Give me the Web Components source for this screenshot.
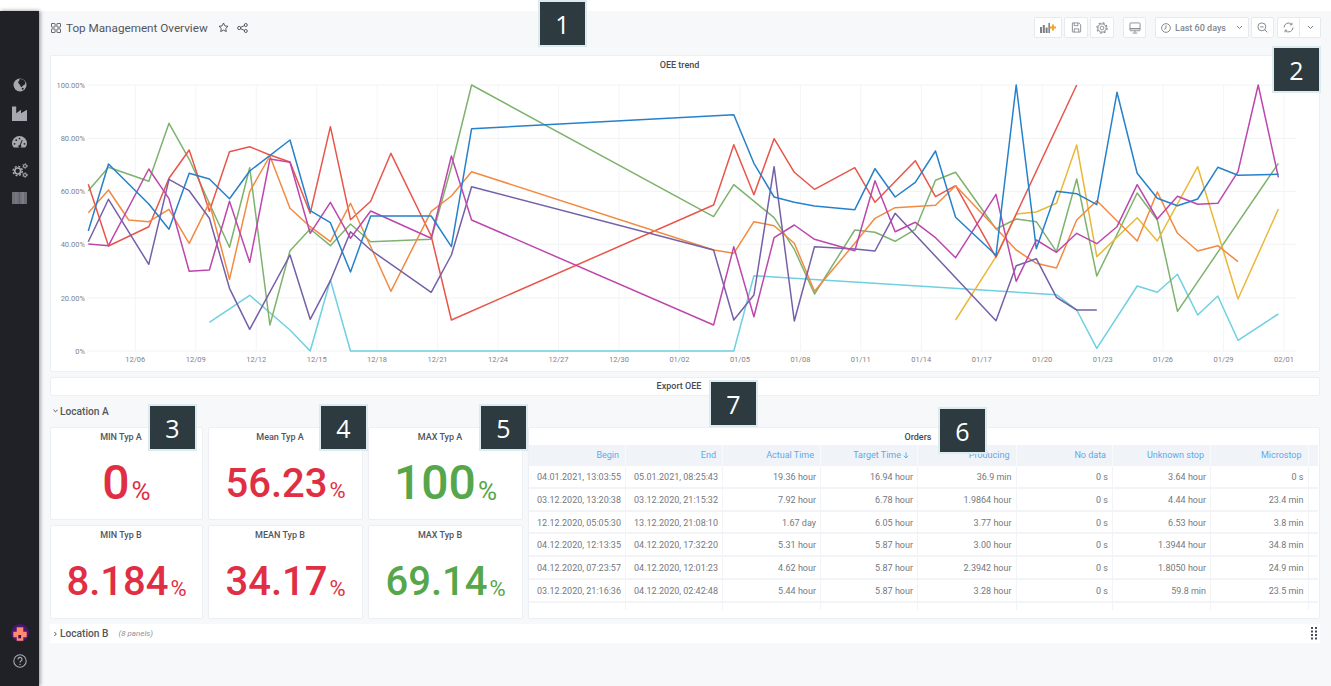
<!DOCTYPE html>
<html><head><meta charset="utf-8"><style>
html,body{margin:0;padding:0;height:100%;background:#fff;overflow:hidden}
body{font-family:Roboto,"Liberation Sans",sans-serif;color:#464c54}
</style></head><body>
<x-app>
  <x-sidebar></x-sidebar>
  <x-main>
    <x-toolbar></x-toolbar>
    <x-chart></x-chart>
    <x-bar-title>Export OEE</x-bar-title>
    <x-row-head open>Location A</x-row-head>
    <x-grid>
      <x-stat label="MIN Typ A" value="0" color="#e02f44" size="48" unit="26" base="17"></x-stat>
      <x-stat label="Mean Typ A" value="56.23" color="#e02f44" size="40" unit="22" base="19"></x-stat>
      <x-stat label="MAX Typ A" value="100" color="#56a64b" size="48" unit="26" base="17"></x-stat>
      <x-table></x-table>
      <x-stat label="MIN Typ B" value="8.184" color="#e02f44" size="40" unit="22" base="20"></x-stat>
      <x-stat label="MEAN Typ B" value="34.17" color="#e02f44" size="40" unit="22" base="20"></x-stat>
      <x-stat label="MAX Typ B" value="69.14" color="#56a64b" size="40" unit="22" base="20"></x-stat>
    </x-grid>
    <x-row-head note="(8 panels)" handle>Location B</x-row-head>
  </x-main>
  <x-callout n="1" x="538" y="0"></x-callout>
  <x-callout n="2" x="1272" y="46"></x-callout>
  <x-callout n="3" x="148" y="404"></x-callout>
  <x-callout n="4" x="319" y="404"></x-callout>
  <x-callout n="5" x="479" y="404"></x-callout>
  <x-callout n="6" x="938" y="407"></x-callout>
  <x-callout n="7" x="709" y="380"></x-callout>
</x-app>
<script>
const def=(name,render)=>customElements.define(name,class extends HTMLElement{
  constructor(){super();this.attachShadow({mode:'open'});}
  connectedCallback(){this.shadowRoot.innerHTML=render(this);}
});
def('x-app',()=>`<style>:host{display:flex;position:relative;width:1331px;height:686px;box-sizing:border-box;padding-top:11px;background:#fff;overflow:hidden}</style><slot></slot>`);

const I='#a6a9b0', D='#1f2126';
def('x-sidebar',()=>`<style>
:host{display:flex;flex-direction:column;align-items:center;width:39px;flex:none;background:${D};box-shadow:1px 0 4px rgba(0,0,0,.45);position:relative;z-index:2;box-sizing:border-box;padding:60px 0 18px}
.top{display:flex;flex-direction:column;align-items:center}
.top>div{height:28.300px;display:flex;align-items:center;justify-content:center}
.bot{margin-top:auto;display:flex;flex-direction:column;align-items:center;gap:12px}
svg{display:block}
</style>
<div class="top">
<div><svg width="14" height="14" viewBox="0 0 14 14"><circle cx="7" cy="7" r="6.500" fill="${I}"/><path d="M6.500 1.200c1.800-.4 4 .4 5.300 2 .5 1 .6 2 .3 3-.8.700-1.800 1-2.500 1.700-.5.500-.9 1.200-1.500 1.100-.8-.2-.7-1.200-1-1.900C6.800 6.200 5 5.500 5.200 4.300c.2-1.200 1.600-1.700 1.300-3.100z" fill="${D}"/><circle cx="9.700" cy="10.700" r="1" fill="${D}"/></svg></div>
<div><svg width="15" height="15" viewBox="0 0 15 15"><path d="M0 .5h4.200v6.700L9 3.800v3.400l6-3.400V15H0z" fill="${I}"/></svg></div>
<div><svg width="15" height="12" viewBox="0 0 15 12"><path d="M1.800 11.500C.7 10.300 0 8.900 0 7.500a7.500 7.500 0 0 1 15 0c0 1.400-.7 2.800-1.800 4z" fill="${I}"/><g fill="${D}"><circle cx="2.500" cy="7.800" r=".9"/><circle cx="4.200" cy="4.200" r=".9"/><circle cx="7.500" cy="2.600" r=".9"/><circle cx="12.500" cy="7.800" r=".9"/><path d="M9.800 4l.9.300-2 5a1.400 1.400 0 1 1-1-.3z"/></g></svg></div>
<div><svg width="16" height="15" viewBox="0 0 16 15"><g fill="none" stroke="${I}"><circle cx="5.700" cy="8" r="3" stroke-width="1.700"/><circle cx="5.700" cy="8" r="4.600" stroke-width="1.400" stroke-dasharray="2 1.610"/><circle cx="13" cy="3" r="1.500" stroke-width="1.100"/><circle cx="13" cy="3" r="2.400" stroke-width=".8" stroke-dasharray="1.200 1.310"/><circle cx="13" cy="12" r="1.500" stroke-width="1.100"/><circle cx="13" cy="12" r="2.400" stroke-width=".8" stroke-dasharray="1.200 1.310"/></g></svg></div>
<div><svg width="15" height="12" viewBox="0 0 15 12"><defs><linearGradient id="bc"><stop offset="0" stop-color="#6a6d72"/><stop offset=".3" stop-color="#7b7e85"/><stop offset=".5" stop-color="#6b6478"/><stop offset=".7" stop-color="#84868c"/><stop offset="1" stop-color="#63666b"/></linearGradient></defs><rect width="15" height="12" fill="url(#bc)"/><path d="M2.500 0v12M5 0v12M7.500 0v12M10 0v12M12.500 0v12" stroke="#55575c" stroke-width=".5" opacity=".6"/></svg></div>
</div>
<div class="bot">
<svg width="18" height="18" viewBox="0 0 18 18"><circle cx="9" cy="9" r="9" fill="#4b1670"/><path d="M5.700 3.300h6.600v4.400h3.400v5.600h-3.400v3.400H5.700v-3.400H2.300V7.700h3.400z" fill="#ff8a6e"/><rect x="7.300" y="11" width="2.800" height="3.300" fill="#3a1560"/></svg>
<svg width="14" height="14" viewBox="0 0 14 14" fill="none" stroke="${I}"><circle cx="7" cy="7" r="6.200" stroke-width="1.100"/><path d="M5 5.400a2 2 0 1 1 3 1.700c-.7.400-1 .8-1 1.500" stroke-width="1.200"/><circle cx="7" cy="10.400" r=".7" fill="${I}" stroke="none"/></svg>
</div>`);

def('x-main',()=>`<style>:host{flex:1;display:flex;flex-direction:column;background:#f7f8fa;padding:0 11px;min-width:0}</style><slot></slot>`);

const G='#7b7f86';
const ic={
 add:`<svg width="16" height="11" viewBox="0 0 16 11"><g fill="${G}"><rect x="0" y="5" width="2" height="6"/><rect x="2.800" y="3" width="2" height="8"/><rect x="5.600" y="5.500" width="2" height="5.500"/><rect x="8.400" y="1" width="1.500" height="10"/></g><path d="M13 2.500v6M10 5.500h6" stroke="#f5a623" stroke-width="2"/></svg>`,
 save:`<svg width="11" height="11" viewBox="0 0 12 12" fill="none" stroke="${G}" stroke-width=".9"><path d="M1.500 1h7l2 2v7.500a.5.500 0 0 1-.5.500H2a.5.500 0 0 1-.5-.5z"/><path d="M3.500 1v3h4V1M3.500 11V7.500h5V11"/></svg>`,
 gear:`<svg width="12" height="12" viewBox="0 0 13 13" fill="none" stroke="${G}"><circle cx="6.500" cy="6.500" r="2" stroke-width=".9"/><circle cx="6.500" cy="6.500" r="4.500" stroke-width="1"/><circle cx="6.500" cy="6.500" r="5.600" stroke-width="1.100" stroke-dasharray="2.200 2.200"/></svg>`,
 mon:`<svg width="12" height="12" viewBox="0 0 13 13" fill="none" stroke="${G}" stroke-width=".9"><rect x="1" y="1" width="11" height="8.500" rx="1"/><path d="M1 7.300h11" stroke-width="1.300"/><path d="M6.500 9.500v2M4 12h5"/></svg>`,
 clock:`<svg width="10" height="10" viewBox="0 0 11 11" fill="none" stroke="${G}" stroke-width="1"><circle cx="5.500" cy="5.500" r="4.800"/><path d="M5.500 2.500v3.300L3.500 7"/></svg>`,
 chev:`<svg width="7" height="5" viewBox="0 0 7 5" fill="none" stroke="${G}" stroke-width="1"><path d="M1 1l2.500 2.500L6 1"/></svg>`,
 zoom:`<svg width="11" height="11" viewBox="0 0 12 12" fill="none" stroke="${G}" stroke-width="1"><circle cx="5.300" cy="5.300" r="4.300"/><path d="M8.500 8.500l2.800 2.800M3.300 5.300h4"/></svg>`,
 sync:`<svg width="11" height="11" viewBox="0 0 12 12" fill="none" stroke="${G}" stroke-width="1"><path d="M1.100 6A4.900 4.900 0 0 1 9.400 2.500M10.900 6a4.900 4.900 0 0 1-8.300 3.500"/><path d="M9.800.7v2.400H7.400M2.200 11.300V8.900h2.400" stroke-width=".9"/></svg>`
};
def('x-toolbar',()=>`<style>
:host{display:flex;align-items:center;height:44px;flex:none;color:#52565d;box-sizing:border-box;padding-bottom:11px}
.t{display:flex;align-items:center;font-size:11.700px;color:#52565d}
.t svg{display:block}
.r{margin-left:auto;display:flex;align-items:center;margin-right:-1px}
.b{height:21px;box-sizing:border-box;background:#fff;border:1px solid #e6e9ee;border-radius:2px;display:flex;align-items:center;justify-content:center}
.time{font-size:9px;font-weight:500;color:#83878e;gap:4px}
</style>
<div class="t">
<svg width="10" height="10" viewBox="0 0 11 11" fill="none" stroke="#52565d" stroke-width="1" style="margin:0 5px 0 1px"><rect x=".5" y=".5" width="4" height="4" rx=".5"/><rect x="6.500" y=".5" width="4" height="4" rx=".5"/><rect x=".5" y="6.500" width="4" height="4" rx=".5"/><rect x="6.500" y="6.500" width="4" height="4" rx=".5"/></svg>
<span>Top Management Overview</span>
<svg width="11" height="11" viewBox="0 0 11 11" fill="none" stroke="#45494f" stroke-width=".9" style="margin-left:10px"><path d="M5.500 1l1.400 2.900 3.100.4-2.300 2.200.6 3.100-2.800-1.500-2.800 1.500.6-3.100L1 4.300l3.100-.4z"/></svg>
<svg width="11" height="10" viewBox="0 0 11 10" fill="none" stroke="#45494f" stroke-width=".9" style="margin-left:8px"><circle cx="2.200" cy="5" r="1.600"/><circle cx="8.800" cy="2" r="1.500"/><circle cx="8.800" cy="8" r="1.500"/><path d="M3.700 4.300l3.700-1.700M3.700 5.700l3.700 1.700"/></svg>
</div>
<div class="r">
<div class="b" style="width:28px;margin-right:2px">${ic.add}</div>
<div class="b" style="width:24px;margin-right:2px">${ic.save}</div>
<div class="b" style="width:24px;margin-right:9px">${ic.gear}</div>
<div class="b" style="width:23px;margin-right:9px">${ic.mon}</div>
<div class="b time" style="width:94px;margin-right:2px">${ic.clock}<span>Last 60 days</span><span style="width:2px"></span>${ic.chev}</div>
<div class="b" style="width:23px;margin-right:3px">${ic.zoom}</div>
<div class="b" style="width:23px;border-radius:2px 0 0 2px">${ic.sync}</div>
<div class="b" style="width:21px;border-left:0;border-radius:0 2px 2px 0">${ic.chev}</div>
</div>`);

const S=[
 ['#6ed0e0',[[6,757],[8,676],[10,780],[11,843],[12,630],[13,843],[32,843],[33,617],[48,674],[49,720],[50,835],[52,648],[53,667],[54,613],[55,735],[56,678],[57,811],[59,732]]],
 ['#7eb26d',[[0,362],[1,292],[3,334],[4,160],[5,268],[7,532],[8,293],[9,765],[10,542],[11,477],[12,527],[13,462],[14,515],[17,508],[18,290],[19,45],[31,440],[32,344],[34,443],[35,538],[36,672],[38,480],[39,487],[40,514],[41,478],[42,331],[43,307],[45,477],[46,447],[47,455],[48,545],[49,327],[50,618],[52,369],[53,450],[54,724],[59,280]]],
 ['#eab839',[[43,750],[45,560],[46,432],[47,426],[48,400],[49,225],[50,560],[52,443],[53,513],[55,290],[57,687],[59,417]]],
 ['#e8554a',[[0,343],[1,528],[3,470],[4,325],[5,240],[6,424],[7,245],[8,230],[9,255],[10,276],[11,430],[12,170],[13,449],[14,394],[15,250],[17,498],[18,750],[31,405],[32,224],[33,374],[34,206],[35,307],[36,358],[38,293],[39,397],[41,272],[42,380],[43,347],[45,562],[49,45]]],
 ['#f28a42',[[0,428],[1,360],[2,450],[3,455],[4,418],[5,520],[6,398],[7,628],[8,365],[9,258],[10,415],[11,470],[12,515],[13,400],[14,530],[15,664],[17,424],[18,378],[19,305],[31,540],[32,550],[33,455],[34,467],[35,520],[36,664],[38,520],[39,445],[40,413],[42,406],[43,347],[45,475],[46,540],[47,580],[48,594],[49,450],[50,392],[52,513],[53,366],[54,490],[55,543],[56,527],[57,575]]],
 ['#7560a8',[[0,515],[1,388],[3,583],[4,328],[5,362],[6,445],[7,655],[8,778],[10,555],[11,748],[12,632],[13,485],[14,540],[17,667],[18,555],[19,350],[31,540],[32,750],[33,675],[34,290],[35,753],[36,530],[38,537],[39,543],[40,430],[45,752],[46,587],[47,566],[48,682],[49,720],[50,720]]],
 ['#bd47ac',[[0,522],[1,527],[3,297],[4,386],[5,604],[6,600],[7,394],[8,577],[9,267],[10,277],[11,490],[12,397],[13,505],[14,423],[17,505],[18,258],[19,450],[31,765],[32,530],[33,740],[34,503],[35,465],[36,508],[38,542],[39,332],[40,485],[41,457],[42,503],[43,563],[45,373],[46,634],[47,510],[48,547],[49,490],[50,521],[51,470],[52,344],[53,447],[54,379],[55,403],[56,400],[57,305],[58,45],[59,322]]],
 ['#2581cb',[[0,483],[1,282],[3,402],[4,478],[5,310],[6,327],[7,386],[8,303],[10,210],[11,422],[12,458],[13,606],[14,438],[17,438],[18,530],[19,176],[32,134],[33,280],[34,381],[35,397],[36,408],[38,419],[39,296],[40,381],[41,337],[42,243],[43,442],[45,556],[46,45],[47,536],[48,364],[49,371],[50,404],[51,67],[52,310],[53,385],[54,407],[55,387],[56,292],[57,316],[59,313]]]
];
const X=i=>(38.33+20.17*i).toFixed(1), Y=z=>(70+z/3-55).toFixed(1);
const ticks=['12/06','12/09','12/12','12/15','12/18','12/21','12/24','12/27','12/30','01/02','01/05','01/08','01/11','01/14','01/17','01/20','01/23','01/26','01/29','02/01'];
const tx=i=>85.3+i*60.46;
const ys=[['100.00%',85],['80.00%',138.3],['60.00%',191.3],['40.00%',244.3],['20.00%',298],['0%',351]];
def('x-chart',()=>`<style>
:host{display:block;height:317px;flex:none;background:#fff;border:1px solid #eceff3;box-sizing:border-box;border-radius:2px;position:relative}
.h{font-size:9px;font-weight:500;color:#464c54;text-align:center;line-height:9px;padding:5px 11px 0 0}
svg{position:absolute;left:-1px;top:-1px;display:block}
text{font:7.500px Roboto,sans-serif;fill:#7f8288}
</style>
<svg width="1270" height="317" viewBox="0 0 1270 317">
${ys.map(([t,y])=>`<path d="M37 ${y-55}H1246.700" stroke="#f1f2f4" stroke-width="1"/><text x="35" y="${y-55+2.700}" text-anchor="end">${t}</text>`).join('')}
${ticks.map((t,i)=>`<path d="M${tx(i).toFixed(1)} 30V296" stroke="#f3f4f6"/><text x="${tx(i).toFixed(1)}" y="307" text-anchor="middle">${t}</text>`).join('')}
${S.map(([c,p])=>`<polyline fill="none" stroke="${c}" stroke-width="1.500" stroke-linejoin="round" points="${p.map(([i,z])=>X(i)+','+Y(z)).join(' ')}"/>`).join('')}
</svg><div class="h">OEE trend</div>`);

def('x-bar-title',()=>`<style>:host{display:block;height:19px;flex:none;margin-top:5px;background:#fff;border:1px solid #eceff3;border-radius:2px;box-sizing:border-box;font-size:9px;font-weight:500;line-height:17px;text-align:center;color:#464c54;padding-right:12px}</style><slot></slot>`);

def('x-row-head',el=>{const o=el.hasAttribute('open'),n=el.getAttribute('note'),h=el.hasAttribute('handle');return `<style>
:host{display:flex;align-items:center;flex:none;height:${o?'26px':'19px'};margin-top:${o?'2px':'5px'};margin-bottom:${o?'3px':'0'};${o?'':'background:#fff;'}font-size:10.200px;font-weight:500;color:#52565d;padding-left:3px;box-sizing:border-box}
svg{display:block;margin-right:2px}
.n{font-size:8px;font-style:italic;font-weight:400;color:#8e9198;margin-left:10px}
</style>
<svg width="5" height="6" viewBox="0 0 6 6" fill="none" stroke="#52565d" stroke-width="1.200">${o?'<path d="M.5 1.500L3 4l2.500-2.500"/>':'<path d="M1.500 .5L4 3 1.500 5.500"/>'}</svg>
<span><slot></slot></span>${n?`<span class="n">${n}</span>`:''}
${h?`<svg width="6" height="13" viewBox="0 0 6 13" fill="#464c54" style="margin-right:3px;margin-left:auto">${[0,1,2,3].map(r=>`<rect x="0" y="${r*3.500}" width="2" height="2"/><rect x="4" y="${r*3.500}" width="2" height="2"/>`).join('')}</svg>`:''}`});

def('x-grid',()=>`<style>:host{display:grid;flex:none;grid-template-columns:153px 155px 155px 1fr;grid-template-rows:93px 94px;gap:5px}::slotted(x-table){grid-column:4;grid-row:1 / span 2}</style><slot></slot>`);

def('x-stat',el=>{const a=k=>el.getAttribute(k);return `<style>
:host{display:flex;flex-direction:column;align-items:center;background:#fff;border:1px solid #eceff3;border-radius:2px;box-sizing:border-box}
.l{font-size:9px;font-weight:500;line-height:10px;margin:4px 11px 0 0;color:#52565d}
.v{flex:1;display:flex;align-items:flex-end;justify-content:center;color:${a('color')};padding-bottom:${a('base')}px;line-height:1}
.n{font-size:${a('size')}px;font-weight:500;line-height:.8}
.u{font-size:${a('unit')}px;font-weight:400;line-height:.8;margin-left:2px}
</style><div class="l">${a('label')}</div><div class="v"><span class="n">${a('value')}</span><span class="u">%</span></div>`});

const cols=['Begin','End','Actual Time','Target Time','Producing','No data','Unknown stop','Microstop'];
const rows=[
['04.01.2021, 13:03:55','05.01.2021, 08:25:43','19.36 hour','16.94 hour','36.9 min','0 s','3.64 hour','0 s'],
['03.12.2020, 13:20:38','03.12.2020, 21:15:32','7.92 hour','6.78 hour','1.9864 hour','0 s','4.44 hour','23.4 min'],
['12.12.2020, 05:05:30','13.12.2020, 21:08:10','1.67 day','6.05 hour','3.77 hour','0 s','6.53 hour','3.8 min'],
['04.12.2020, 12:13:35','04.12.2020, 17:32:20','5.31 hour','5.87 hour','3.00 hour','0 s','1.3944 hour','34.8 min'],
['04.12.2020, 07:23:57','04.12.2020, 12:01:23','4.62 hour','5.87 hour','2.3942 hour','0 s','1.8050 hour','24.9 min'],
['03.12.2020, 21:16:36','04.12.2020, 02:42:48','5.44 hour','5.87 hour','3.28 hour','0 s','59.8 min','23.5 min']];
const tpl='97px 97px 98px 97px 98.500px 96.500px 98px 97.500px 10px';
def('x-table',()=>`<style>
:host{display:block;background:#fff;border:1px solid #eceff3;border-radius:2px;box-sizing:border-box;font-size:9px;min-width:0}
.h{font-weight:500;line-height:10px;text-align:center;color:#464c54;height:17px;padding:4px 12px 0 0;box-sizing:border-box}
.r{display:grid;grid-template-columns:${tpl};margin-right:1px}
.hd{background:#f0f3f8;height:21px}
.hd div{color:#5fa9ea;text-align:right;padding-right:6px;line-height:21px;border-right:1px solid #f9fafc;box-sizing:border-box}
.hd .s{padding-right:8px}
.b{height:22.800px;border-bottom:2px solid #f3f4f7;box-sizing:border-box}
.b div{color:#74787f;text-align:right;padding-right:4px;line-height:22.800px;border-right:1.500px solid #f3f4f7;box-sizing:border-box;white-space:nowrap}
.e{height:7px}
.e div{border-right:1.500px solid #f3f4f7;box-sizing:border-box}
svg{vertical-align:-1px;margin-left:2px}
</style>
<div class="h">Orders</div>
<div class="r hd">${cols.map(c=>c=='Target Time'?`<div class="s">${c}<svg width="6" height="7" viewBox="0 0 6 7" fill="none" stroke="#5fa9ea" stroke-width=".9"><path d="M3 .5v5.500M.8 3.800L3 6l2.200-2.200"/></svg></div>`:`<div>${c}</div>`).join('')}<div style="border:0"></div></div>
${rows.map(r=>`<div class="r b">${r.map(c=>`<div>${c}</div>`).join('')}<div style="border:0"></div></div>`).join('')}
<div class="r e">${cols.map(()=>`<div></div>`).join('')}<div style="border:0"></div></div>`);

def('x-callout',el=>`<style>:host{position:absolute;z-index:5;left:${el.getAttribute('x')}px;top:${el.getAttribute('y')}px;width:49px;height:47px;box-sizing:border-box;background:#2d3a40;border:2px solid #dcebf0;color:#fff;font:25px "Open Sans",sans-serif;display:flex;align-items:center;justify-content:center}</style>${el.getAttribute('n')}`);
</script>
</body></html>
